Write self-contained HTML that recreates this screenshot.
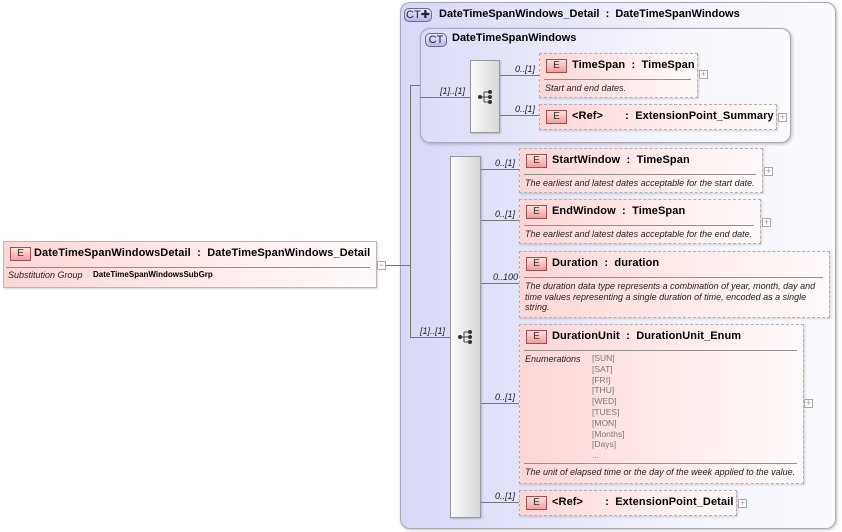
<!DOCTYPE html>
<html><head><meta charset="utf-8"><style>
*{margin:0;padding:0;box-sizing:border-box}
body{width:842px;height:532px;background:#fff;position:relative;overflow:hidden;font-family:"Liberation Sans",Arial,sans-serif;font-size:11px;color:#000}
.a{position:absolute}
.ct{position:absolute;border:1px solid #a8a8b8;border-radius:10px;background:linear-gradient(to right,#d8d8f8,#f4f4fc 70%,#fafafe);box-shadow:1px 1px 3px rgba(0,0,0,.25)}
.ctb{position:absolute;height:14px;border:1px solid #6a6a90;border-radius:5px;background:linear-gradient(#e8e8ff,#b8b8f0);font-size:11px;line-height:12px;text-align:center;color:#222}
.el{position:absolute;border:1px dashed #b0b0b0;background:linear-gradient(to right,#ffd6d6,#fff0f0 70%,#fffafa);box-shadow:1px 1px 2px rgba(0,0,0,.15)}
.el.solid{border-style:solid}
.eb{position:absolute;left:6px;top:5px;width:21px;height:14px;border:1px solid #a05050;background:linear-gradient(#ffe0e0,#f0a0a0);font-size:10px;line-height:12px;text-align:center;color:#333}
.t{position:absolute;left:32px;top:5px;font-weight:bold;font-size:11px;white-space:pre;letter-spacing:0.1px}
.hr{position:absolute;left:4px;right:6px;height:1px;background:#909090}
.d{position:absolute;left:5px;font-style:italic;font-size:9px;line-height:10.5px;color:#222}
.pl{position:absolute;width:9px;height:9px;border:1px solid #aaa;background:#fff;font-size:9px;line-height:7px;text-align:center;color:#999}
.ln{position:absolute;background:#777}
.lb{position:absolute;font-style:italic;font-size:9px;color:#222}
.seq{position:absolute;border:1px solid #999;background:linear-gradient(to right,#fafafa,#d8d8d8);box-shadow:1px 1px 2px rgba(0,0,0,.2)}
</style></head><body>

<div class="ct" style="left:400px;top:2px;width:436px;height:527px"></div>
<div class="ctb" style="left:404px;top:8px;width:28px">CT✚</div>
<div class="a" style="left:439px;top:8px;font-weight:bold;font-size:11px;white-space:pre">DateTimeSpanWindows_Detail  :  DateTimeSpanWindows</div>

<div class="ct" style="left:420px;top:28px;width:371px;height:115px;background:linear-gradient(to right,#dcdcf8,#f6f6fc 70%,#fbfbfe)"></div>
<div class="ctb" style="left:425px;top:33px;width:22px">CT</div>
<div class="a" style="left:452px;top:32px;font-weight:bold;font-size:11px">DateTimeSpanWindows</div>

<div class="ln" style="left:386px;top:265px;width:25px;height:1px"></div>
<div class="ln" style="left:410px;top:85px;width:1px;height:253px"></div>
<div class="ln" style="left:410px;top:85px;width:10px;height:1px"></div>
<div class="ln" style="left:420px;top:97px;width:50px;height:1px"></div>
<div class="lb" style="left:440px;top:86px">[1]..[1]</div>
<div class="ln" style="left:410px;top:337px;width:41px;height:1px"></div>
<div class="lb" style="left:420px;top:326px">[1]..[1]</div>

<div class="seq" style="left:470px;top:60px;width:30px;height:73px"></div>
<svg class="a" style="left:477px;top:88px" width="18" height="18" viewBox="0 0 18 18"><path d="M2 9H7M7 4V14M7 4H13M7 9H13M7 14H13" stroke="#444" fill="none"/><circle cx="3" cy="9" r="2" fill="#333"/><circle cx="13" cy="4" r="2" fill="#333"/><circle cx="13" cy="9" r="2" fill="#333"/><circle cx="13" cy="14" r="2" fill="#333"/></svg>
<div class="ln" style="left:500px;top:75px;width:40px;height:1px"></div>
<div class="lb" style="left:515px;top:64px">0..[1]</div>
<div class="ln" style="left:500px;top:115px;width:40px;height:1px"></div>
<div class="lb" style="left:515px;top:104px">0..[1]</div>

<div class="el" style="left:539px;top:53px;width:159px;height:45px"><div class="eb">E</div><div class="t">TimeSpan  :  TimeSpan</div><div class="hr" style="top:25px"></div><div class="d" style="top:29px">Start and end dates.</div></div>
<div class="pl" style="left:699px;top:70px">+</div>
<div class="el" style="left:539px;top:104px;width:238px;height:26px"><div class="eb">E</div><div class="t">&lt;Ref&gt;       :  ExtensionPoint_Summary</div></div>
<div class="pl" style="left:778px;top:113px">+</div>

<div class="seq" style="left:450px;top:156px;width:31px;height:362px"></div>
<svg class="a" style="left:457px;top:328px" width="18" height="18" viewBox="0 0 18 18"><path d="M2 9H7M7 4V14M7 4H13M7 9H13M7 14H13" stroke="#444" fill="none"/><circle cx="3" cy="9" r="2" fill="#333"/><circle cx="13" cy="4" r="2" fill="#333"/><circle cx="13" cy="9" r="2" fill="#333"/><circle cx="13" cy="14" r="2" fill="#333"/></svg>

<div class="ln" style="left:481px;top:169px;width:39px;height:1px"></div><div class="lb" style="left:495px;top:158px">0..[1]</div>
<div class="ln" style="left:481px;top:220px;width:39px;height:1px"></div><div class="lb" style="left:495px;top:209px">0..[1]</div>
<div class="ln" style="left:481px;top:283px;width:39px;height:1px"></div><div class="lb" style="left:493px;top:272px">0..100</div>
<div class="ln" style="left:481px;top:403px;width:39px;height:1px"></div><div class="lb" style="left:495px;top:392px">0..[1]</div>
<div class="ln" style="left:481px;top:502px;width:39px;height:1px"></div><div class="lb" style="left:495px;top:491px">0..[1]</div>

<div class="el" style="left:519px;top:148px;width:244px;height:45px"><div class="eb">E</div><div class="t">StartWindow  :  TimeSpan</div><div class="hr" style="top:25px"></div><div class="d" style="top:29px">The earliest and latest dates acceptable for the start date.</div></div>
<div class="pl" style="left:764px;top:167px">+</div>
<div class="el" style="left:519px;top:199px;width:242px;height:45px"><div class="eb">E</div><div class="t">EndWindow  :  TimeSpan</div><div class="hr" style="top:25px"></div><div class="d" style="top:29px">The earliest and latest dates acceptable for the end date.</div></div>
<div class="pl" style="left:762px;top:218px">+</div>
<div class="el" style="left:519px;top:251px;width:311px;height:67px"><div class="eb">E</div><div class="t">Duration  :  duration</div><div class="hr" style="top:25px"></div><div class="d" style="top:29px;width:298px">The duration data type represents a combination of year, month, day and time values representing a single duration of time, encoded as a single string.</div></div>
<div class="el" style="left:519px;top:324px;width:285px;height:160px"><div class="eb">E</div><div class="t">DurationUnit  :  DurationUnit_Enum</div><div class="hr" style="top:25px"></div>
<div class="d" style="top:29px">Enumerations</div>
<div class="a" style="left:72px;top:28px;font-size:8.5px;line-height:10.8px;color:#777">[SUN]<br>[SAT]<br>[FRI]<br>[THU]<br>[WED]<br>[TUES]<br>[MON]<br>[Months]<br>[Days]<br>...</div>
<div class="hr" style="top:138px"></div><div class="d" style="top:142px">The unit of elapsed time or the day of the week applied to the value.</div></div>
<div class="pl" style="left:804px;top:399px">+</div>
<div class="el" style="left:519px;top:490px;width:218px;height:26px"><div class="eb">E</div><div class="t">&lt;Ref&gt;       :  ExtensionPoint_Detail</div></div>
<div class="pl" style="left:738px;top:499px">+</div>

<div class="el solid" style="left:3px;top:241px;width:374px;height:47px;border-color:#b8b8b8"><div class="eb">E</div><div class="t" style="left:30px">DateTimeSpanWindowsDetail  :  DateTimeSpanWindows_Detail</div><div class="hr" style="top:25px;left:2px"></div>
<div class="d" style="top:28px;left:4px">Substitution Group</div><div class="a" style="left:89px;top:28px;font-size:8px;font-weight:bold">DateTimeSpanWindowsSubGrp</div></div>
<div class="pl" style="left:377px;top:261px">−</div>
</body></html>
